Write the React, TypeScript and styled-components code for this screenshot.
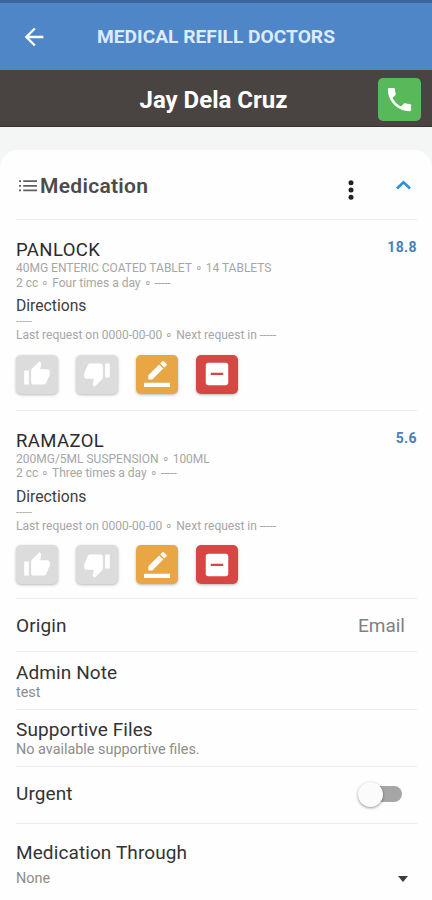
import React from "react";
import styled, { createGlobalStyle } from "styled-components";

const GlobalStyle = createGlobalStyle`
  * { box-sizing: border-box; }
  body {
    margin: 0;
    background: #f4f5f5;
    font-family: Roboto, "Liberation Sans", sans-serif;
    overflow: hidden;
  }
  button { font: inherit; border: 0; padding: 0; background: none; }
`;

const Screen = styled.div`
  width: 432px;
  height: 900px;
  display: flex;
  flex-direction: column;
  overflow: hidden;
`;

const StatusStrip = styled.div`
  flex: none;
  height: 3px;
  background: #3b659c;
`;

const AppBar = styled.header`
  flex: none;
  height: 67px;
  display: grid;
  grid-template-columns: 70px 1fr 70px;
  align-items: center;
  background: #4f86c8;
`;

const BackButton = styled.button`
  display: flex;
  justify-content: center;
  padding-right: 2px;
  color: #fff;
`;

const AppTitle = styled.h1`
  margin: 1px -5px 0 -5px;
  text-align: center;
  white-space: nowrap;
  font-size: 19.2px;
  line-height: 24px;
  font-weight: 700;
  color: #dcebff;
`;

const PatientBar = styled.div`
  flex: none;
  height: 57px;
  display: grid;
  grid-template-columns: 54px 1fr 54px;
  align-items: center;
  background: #494442;
  border-bottom: 1px solid #353130;
`;

const PatientName = styled.h2`
  grid-column: 2;
  margin: 4px 0 0;
  padding-right: 5px;
  text-align: center;
  font-size: 24px;
  line-height: 28px;
  font-weight: 700;
  color: #fff;
`;

const CallButton = styled.button`
  width: 43px;
  height: 43px;
  margin-top: 2px;
  border-radius: 5px;
  background: #57b95a;
  display: flex;
  align-items: center;
  justify-content: center;
`;

const Card = styled.main`
  flex: none;
  height: 770px;
  margin-top: 23px;
  padding: 0 15px 0 16px;
  border-radius: 18px 18px 0 0;
  background: #fefefe;
`;

const CardHeader = styled.div`
  height: 70px;
  display: flex;
  align-items: center;
  border-bottom: 1px solid #ececec;
`;

const CardTitle = styled.h3`
  flex: 1;
  margin: 2px 0 0;
  font-size: 21px;
  line-height: 26px;
  font-weight: 600;
  letter-spacing: 0.3px;
  color: #4b4b4b;
`;

const HeaderIcon = styled.span<{ $width: number; $shift?: number; $gap?: number }>`
  display: flex;
  justify-content: center;
  width: ${(p) => p.$width}px;
  margin-top: ${(p) => p.$shift ?? 0}px;
  margin-right: ${(p) => p.$gap ?? 0}px;
`;

const Medicine = styled.section<{ $height: number }>`
  height: ${(p) => p.$height}px;
  padding-top: 18px;
  border-bottom: 1px solid #ececec;
`;

const Row = styled.div`
  display: flex;
  justify-content: space-between;
  align-items: flex-start;
`;

const Name = styled.div`
  padding-top: 1px;
  font-size: 18.5px;
  line-height: 22px;
  letter-spacing: 0.4px;
  color: #2b2b2b;
`;

const Amount = styled.div`
  font-size: 14px;
  line-height: 18px;
  font-weight: 700;
  letter-spacing: 0.4px;
  color: #4580bb;
`;

const Detail = styled.div`
  font-size: 12px;
  line-height: 14.5px;
  white-space: nowrap;
  color: #a6a6a6;
`;

const Dashes = styled.span`
  letter-spacing: -0.1px;
`;

const DirectionsLabel = styled.div`
  margin-top: 6px;
  font-size: 15.7px;
  line-height: 19px;
  color: #3d3d3d;
`;

const DirectionsValue = styled.div`
  height: 13px;
  padding-top: 1px;
  font-size: 12px;
  line-height: 10px;
  letter-spacing: -0.1px;
  color: #b4b4b4;
`;

const Actions = styled.div`
  display: flex;
  gap: 18px;
  margin-top: 12px;
`;

const Action = styled.button<{ $color: string }>`
  width: 42px;
  height: 39px;
  border-radius: 5px;
  background: ${(p) => p.$color};
  box-shadow: 0 1px 3px rgba(0, 0, 0, 0.28);
  display: flex;
  align-items: center;
  justify-content: center;
`;

const Field = styled.section<{ $height: number; $pad: number; $last?: boolean }>`
  height: ${(p) => p.$height}px;
  padding-top: ${(p) => p.$pad}px;
  border-bottom: ${(p) => (p.$last ? "0" : "1px solid #ececec")};
`;

const FieldLabel = styled.div`
  font-size: 19px;
  line-height: 24px;
  letter-spacing: 0.1px;
  color: #333;
`;

const FieldValue = styled.div`
  font-size: 14.4px;
  line-height: 16px;
  color: #8c8c8c;
`;

const Choice = styled.div`
  padding-right: 12px;
  font-size: 19px;
  line-height: 24px;
  color: #808080;
`;

const SelectRow = styled(Row)`
  align-items: center;
  margin-top: 6px;
`;

const SwitchTrack = styled.span`
  width: 35px;
  height: 16px;
  margin: 4px 15px 0 0;
  border-radius: 8px;
  background: #a6a6a6;
  display: flex;
  align-items: center;
`;

const SwitchThumb = styled.span`
  flex: none;
  width: 25px;
  height: 25px;
  margin-left: -9px;
  border-radius: 50%;
  background: #fbfbfb;
  box-shadow: 0 1px 3px rgba(0, 0, 0, 0.42);
`;

const Caret = styled.span`
  margin: 0 9px 0 0;
  border: 5.5px solid transparent;
  border-top: 6px solid #3c3c3c;
  border-bottom: 0;
`;

type GlyphProps = { d: string; size: number; fill?: string };

const Glyph = ({ d, size, fill = "#fff" }: GlyphProps) => (
  <svg width={size} height={size} viewBox="0 0 24 24" fill={fill}>
    <path d={d} />
  </svg>
);

const paths = {
  back: "M20 11H7.83l5.59-5.59L12 4l-8 8 8 8 1.41-1.41L7.83 13H20v-2z",
  phone:
    "M6.62 10.79c1.44 2.83 3.76 5.14 6.59 6.59l2.2-2.2c.27-.27.67-.36 1.02-.24 1.12.37 2.33.57 3.57.57.55 0 1 .45 1 1V20c0 .55-.45 1-1 1-9.39 0-17-7.61-17-17 0-.55.45-1 1-1h3.5c.55 0 1 .45 1 1 0 1.25.2 2.45.57 3.57.11.35.03.74-.25 1.02l-2.2 2.2z",
  thumbUp:
    "M1 21h4V9H1v12zm22-11c0-1.1-.9-2-2-2h-6.31l.95-4.57.03-.32c0-.41-.17-.79-.44-1.06L14.17 1 7.59 7.59C7.22 7.95 7 8.45 7 9v10c0 1.1.9 2 2 2h9c.83 0 1.54-.5 1.84-1.22l3.02-7.05c.09-.23.14-.47.14-.73v-2z",
  thumbDown:
    "M15 3H6c-.83 0-1.54.5-1.84 1.22l-3.02 7.05c-.09.23-.14.47-.14.73v2c0 1.1.9 2 2 2h6.31l-.95 4.57-.03.32c0 .41.17.79.44 1.06L9.83 23l6.59-6.59c.36-.36.58-.86.58-1.41V5c0-1.1-.9-2-2-2zm4 0v12h4V3h-4z",
  edit:
    "M17.75 7 14 3.25l-10 10V17h3.75l10-10zm2.96-2.96c.39-.39.39-1.02 0-1.41L18.37.29c-.39-.39-1.02-.39-1.41 0L15 2.25 18.75 6l1.96-1.96zM0 20h24v4H0z",
  minusBox:
    "M19 3H5c-1.1 0-2 .9-2 2v14c0 1.1.9 2 2 2h14c1.1 0 2-.9 2-2V5c0-1.1-.9-2-2-2zm-2 9.8H7v-1.8h10v1.8z",
};

type MedicineData = {
  name: string;
  amount: string;
  form: string;
  dose: string;
  height: number;
};

const medicines: MedicineData[] = [
  {
    name: "PANLOCK",
    amount: "18.8",
    form: "40MG ENTERIC COATED TABLET ∘ 14 TABLETS",
    dose: "2 cc ∘ Four times a day ∘ ",
    height: 190.5,
  },
  {
    name: "RAMAZOL",
    amount: "5.6",
    form: "200MG/5ML SUSPENSION ∘ 100ML",
    dose: "2 cc ∘ Three times a day ∘ ",
    height: 188.5,
  },
];

const MedicineItem = ({ item }: { item: MedicineData }) => (
  <Medicine $height={item.height}>
    <Row>
      <Name>{item.name}</Name>
      <Amount>{item.amount}</Amount>
    </Row>
    <Detail>{item.form}</Detail>
    <Detail>
      {item.dose}
      <Dashes>-----</Dashes>
    </Detail>
    <DirectionsLabel>Directions</DirectionsLabel>
    <DirectionsValue>-----</DirectionsValue>
    <Detail>
      Last request on 0000-00-00 ∘ Next request in <Dashes>-----</Dashes>
    </Detail>
    <Actions>
      <Action $color="#dcdcdc" aria-label="Approve">
        <Glyph d={paths.thumbUp} size={28} />
      </Action>
      <Action $color="#dcdcdc" aria-label="Reject">
        <Glyph d={paths.thumbDown} size={28} />
      </Action>
      <Action $color="#e9a644" aria-label="Edit">
        <Glyph d={paths.edit} size={26} />
      </Action>
      <Action $color="#d64643" aria-label="Remove">
        <Glyph d={paths.minusBox} size={30} />
      </Action>
    </Actions>
  </Medicine>
);

export default function App() {
  return (
    <>
      <GlobalStyle />
      <Screen>
        <StatusStrip />
        <AppBar>
          <BackButton aria-label="Back">
            <Glyph d={paths.back} size={28} />
          </BackButton>
          <AppTitle>MEDICAL REFILL DOCTORS</AppTitle>
        </AppBar>
        <PatientBar>
          <PatientName>Jay Dela Cruz</PatientName>
          <CallButton aria-label="Call">
            <Glyph d={paths.phone} size={31} />
          </CallButton>
        </PatientBar>
        <Card>
          <CardHeader>
            <HeaderIcon $width={24} $shift={2}>
              <svg width="18" height="12" viewBox="0 0 18 12" fill="#606060">
                <path d="M0 .3h2v1.8H0zM4.2.3H18v1.8H4.2zM0 4.9h2v1.8H0zM4.2 4.9H18v1.8H4.2zM0 9.4h2v1.8H0zM4.2 9.4H18v1.8H4.2z" />
              </svg>
            </HeaderIcon>
            <CardTitle>Medication</CardTitle>
            <HeaderIcon $width={28} $shift={11} $gap={24}>
              <svg width="6" height="20" viewBox="0 0 6 20" fill="#222">
                <circle cx="3" cy="2.7" r="2.5" />
                <circle cx="3" cy="10" r="2.5" />
                <circle cx="3" cy="17.3" r="2.5" />
              </svg>
            </HeaderIcon>
            <HeaderIcon $width={28} $shift={1}>
              <svg
                width="15"
                height="10"
                viewBox="0 0 15 10"
                fill="none"
                stroke="#2b90e0"
                strokeWidth="2.6"
              >
                <path d="M1 8.5l6.5-6.2L14 8.5" />
              </svg>
            </HeaderIcon>
          </CardHeader>
          {medicines.map((m) => (
            <MedicineItem key={m.name} item={m} />
          ))}
          <Field $height={53} $pad={15}>
            <Row>
              <FieldLabel>Origin</FieldLabel>
              <Choice>Email</Choice>
            </Row>
          </Field>
          <Field $height={58} $pad={9}>
            <FieldLabel>Admin Note</FieldLabel>
            <FieldValue>test</FieldValue>
          </Field>
          <Field $height={57} $pad={8}>
            <FieldLabel>Supportive Files</FieldLabel>
            <FieldValue>No available supportive files.</FieldValue>
          </Field>
          <Field $height={57} $pad={15}>
            <Row>
              <FieldLabel>Urgent</FieldLabel>
              <SwitchTrack>
                <SwitchThumb />
              </SwitchTrack>
            </Row>
          </Field>
          <Field $height={76} $pad={17} $last>
            <FieldLabel>Medication Through</FieldLabel>
            <SelectRow>
              <FieldValue>None</FieldValue>
              <Caret />
            </SelectRow>
          </Field>
        </Card>
      </Screen>
    </>
  );
}
